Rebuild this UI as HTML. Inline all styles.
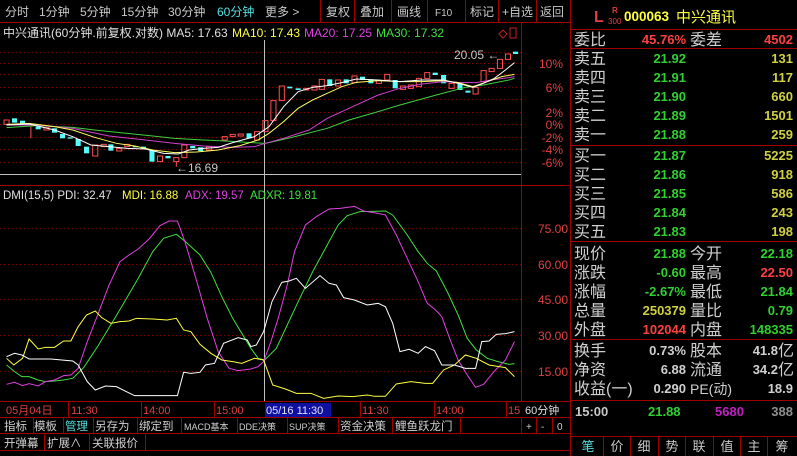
<!DOCTYPE html>
<html><head><meta charset="utf-8"><style>
body{margin:0;background:#000;width:797px;height:456px;overflow:hidden}
svg{display:block}
text{font-family:"Liberation Sans","Noto Sans CJK SC",sans-serif}
.b{font-weight:bold}
</style></head><body>
<svg width="797" height="456" viewBox="0 0 797 456">
<rect width="797" height="456" fill="#000"/>
<g fill="#c8c8c8" font-size="12">
<text x="5" y="16">分时</text><text x="39" y="16">1分钟</text><text x="80" y="16">5分钟</text><text x="121" y="16">15分钟</text><text x="168" y="16">30分钟</text>
<text x="217" y="16" fill="#54e0e0">60分钟</text><text x="265" y="16">更多 &gt;</text>
<text x="326" y="16">复权</text><text x="360" y="16">叠加</text><text x="397" y="16">画线</text><text x="435" y="16" font-size="10">F10</text><text x="470" y="16">标记</text><text x="502" y="16">+自选</text><text x="540" y="16">返回</text>
</g>
<g stroke="#a00000" stroke-width="1">
<line x1="0" y1="22.5" x2="570" y2="22.5"/>
<line x1="320.5" y1="0" x2="320.5" y2="22"/><line x1="354.5" y1="0" x2="354.5" y2="22"/><line x1="391.5" y1="0" x2="391.5" y2="22"/><line x1="427.5" y1="0" x2="427.5" y2="22"/><line x1="465.5" y1="0" x2="465.5" y2="22"/><line x1="498.5" y1="0" x2="498.5" y2="22"/><line x1="536.5" y1="0" x2="536.5" y2="22"/>
<line x1="521.5" y1="22" x2="521.5" y2="401"/>
<line x1="570.5" y1="0" x2="570.5" y2="456"/>
<line x1="0" y1="185.5" x2="570" y2="185.5"/>
<line x1="0" y1="401.5" x2="570" y2="401.5"/>
<line x1="0" y1="417.5" x2="570" y2="417.5"/>
<line x1="0" y1="433.5" x2="570" y2="433.5"/>
<line x1="0" y1="450.5" x2="570" y2="450.5"/>
</g>
<g stroke="#800000" stroke-dasharray="1,3" stroke-width="1">
<line x1="0" y1="52.5" x2="521" y2="52.5"/><line x1="0" y1="63.5" x2="521" y2="63.5"/><line x1="0" y1="74.5" x2="521" y2="74.5"/><line x1="0" y1="87.5" x2="521" y2="87.5"/><line x1="0" y1="99.5" x2="521" y2="99.5"/><line x1="0" y1="112.5" x2="521" y2="112.5"/><line x1="0" y1="124.5" x2="521" y2="124.5"/><line x1="0" y1="137.5" x2="521" y2="137.5"/><line x1="0" y1="149.5" x2="521" y2="149.5"/><line x1="0" y1="162.5" x2="521" y2="162.5"/>
<line x1="0" y1="228.5" x2="521" y2="228.5"/><line x1="0" y1="264.5" x2="521" y2="264.5"/><line x1="0" y1="299.5" x2="521" y2="299.5"/><line x1="0" y1="335.5" x2="521" y2="335.5"/><line x1="0" y1="371.5" x2="521" y2="371.5"/>
</g>
<line x1="0" y1="174.5" x2="521" y2="174.5" stroke="#c0c0c0"/>
<line x1="264.5" y1="40" x2="264.5" y2="401" stroke="#c0c0c0"/>
<g fill="#e04040" font-size="12" text-anchor="end">
<text x="563" y="68">10%</text><text x="563" y="92">6%</text><text x="563" y="117">2%</text><text x="563" y="129">0%</text><text x="563" y="142">-2%</text><text x="563" y="154">-4%</text><text x="563" y="167">-6%</text>
<text x="568" y="233">75.00</text><text x="568" y="269">60.00</text><text x="568" y="304">45.00</text><text x="568" y="340">30.00</text><text x="568" y="376">15.00</text>
</g>
<g font-size="12">
<text x="3" y="37" fill="#e0e0e0">中兴通讯(60分钟.前复权.对数) MA5: 17.63</text>
<text x="232" y="37" fill="#ffff40">MA10: 17.43</text>
<text x="304" y="37" fill="#e040e0">MA20: 17.25</text>
<text x="376" y="37" fill="#40e040">MA30: 17.32</text>
<text x="3" y="199" fill="#e0e0e0" font-size="11.5">DMI(15,5) PDI: 32.47</text>
<text x="122" y="199" fill="#ffff40" font-size="11.5">MDI: 16.88</text>
<text x="185" y="199" fill="#e040e0" font-size="11.5">ADX: 19.57</text>
<text x="250" y="199" fill="#40e040" font-size="11.5">ADXR: 19.81</text>
<text x="454" y="59" fill="#c8c8c8">20.05 ←</text>
<text x="176" y="172" fill="#c8c8c8">←16.69</text>
</g>
<path d="M503 30 l4 4 -4 4 -4 -4z" fill="none" stroke="#c02020"/>
<rect x="510" y="28" width="6" height="10" fill="none" stroke="#c02020"/>
<g transform="translate(0,30) scale(0.3636,0.3333)">
<g fill="#54fcfc">
<rect x="33" y="265" width="14" height="13"/><rect x="55" y="272" width="14" height="10"/><rect x="98" y="290" width="14" height="8"/><rect x="143" y="295" width="14" height="13"/><rect x="165" y="312" width="14" height="13"/><rect x="186" y="322" width="14" height="4"/><rect x="208" y="327" width="14" height="21"/><rect x="231" y="350" width="14" height="20"/><rect x="298" y="343" width="14" height="19"/><rect x="365" y="348" width="14" height="4"/><rect x="388" y="350" width="14" height="7"/><rect x="411" y="360" width="14" height="35"/><rect x="455" y="378" width="14" height="7"/><rect x="523" y="348" width="14" height="7"/><rect x="545" y="352" width="14" height="11"/><rect x="678" y="310" width="14" height="15"/><rect x="790" y="170" width="14" height="5"/><rect x="813" y="175" width="14" height="5"/><rect x="900" y="148" width="14" height="20"/><rect x="945" y="148" width="14" height="12"/><rect x="990" y="140" width="14" height="10"/><rect x="1013" y="148" width="14" height="12"/><rect x="1080" y="150" width="14" height="25"/><rect x="1190" y="128" width="14" height="7"/><rect x="1213" y="135" width="14" height="25"/><rect x="1258" y="162" width="14" height="18"/><rect x="1280" y="182" width="14" height="6"/><rect x="1411" y="65" width="14" height="7"/>
</g>
<g fill="none" stroke="#ff5050" stroke-width="1">
<rect x="11" y="270" width="14" height="13" vector-effect="non-scaling-stroke"/><rect x="121" y="293" width="14" height="7" vector-effect="non-scaling-stroke"/><rect x="255" y="345" width="14" height="33" vector-effect="non-scaling-stroke"/><rect x="278" y="343" width="14" height="7" vector-effect="non-scaling-stroke"/><rect x="321" y="355" width="14" height="8" vector-effect="non-scaling-stroke"/><rect x="343" y="343" width="14" height="7" vector-effect="non-scaling-stroke"/><rect x="433" y="378" width="14" height="17" vector-effect="non-scaling-stroke"/><rect x="478" y="383" width="14" height="12" vector-effect="non-scaling-stroke"/><rect x="500" y="345" width="14" height="38" vector-effect="non-scaling-stroke"/><rect x="568" y="350" width="14" height="10" vector-effect="non-scaling-stroke"/><rect x="611" y="320" width="14" height="10" vector-effect="non-scaling-stroke"/><rect x="633" y="313" width="14" height="7" vector-effect="non-scaling-stroke"/><rect x="655" y="312" width="14" height="6" vector-effect="non-scaling-stroke"/><rect x="700" y="305" width="14" height="25" vector-effect="non-scaling-stroke"/><rect x="723" y="272" width="14" height="33" vector-effect="non-scaling-stroke"/><rect x="745" y="212" width="14" height="60" vector-effect="non-scaling-stroke"/><rect x="768" y="168" width="14" height="44" vector-effect="non-scaling-stroke"/><rect x="835" y="175" width="14" height="5" vector-effect="non-scaling-stroke"/><rect x="858" y="168" width="14" height="12" vector-effect="non-scaling-stroke"/><rect x="878" y="148" width="14" height="30" vector-effect="non-scaling-stroke"/><rect x="923" y="150" width="14" height="18" vector-effect="non-scaling-stroke"/><rect x="968" y="138" width="14" height="20" vector-effect="non-scaling-stroke"/><rect x="1035" y="152" width="14" height="8" vector-effect="non-scaling-stroke"/><rect x="1058" y="133" width="14" height="17" vector-effect="non-scaling-stroke"/><rect x="1101" y="168" width="14" height="10" vector-effect="non-scaling-stroke"/><rect x="1123" y="165" width="14" height="10" vector-effect="non-scaling-stroke"/><rect x="1145" y="145" width="14" height="25" vector-effect="non-scaling-stroke"/><rect x="1168" y="128" width="14" height="17" vector-effect="non-scaling-stroke"/><rect x="1235" y="160" width="14" height="15" vector-effect="non-scaling-stroke"/><rect x="1301" y="172" width="14" height="20" vector-effect="non-scaling-stroke"/><rect x="1323" y="122" width="14" height="33" vector-effect="non-scaling-stroke"/><rect x="1345" y="115" width="14" height="10" vector-effect="non-scaling-stroke"/><rect x="1368" y="88" width="14" height="27" vector-effect="non-scaling-stroke"/><rect x="1390" y="72" width="14" height="16" vector-effect="non-scaling-stroke"/>
<line x1="85" y1="290" x2="85" y2="325" vector-effect="non-scaling-stroke"/><line x1="485" y1="395" x2="485" y2="410" vector-effect="non-scaling-stroke"/>
</g>
<g fill="none" stroke-width="1">
<polyline vector-effect="non-scaling-stroke" stroke="#40d040" points="18,293 100,287 200,292 260,300 350,310 420,318 480,325 560,330 620,333 680,337 730,340 800,323 900,295 960,270 1040,245 1100,225 1200,195 1280,172 1330,165 1400,150 1415,145"/>
<polyline vector-effect="non-scaling-stroke" stroke="#d040d0" points="18,285 100,285 200,295 300,318 400,330 480,340 560,348 640,352 700,350 730,340 780,325 850,300 900,265 960,235 1040,195 1100,175 1160,162 1220,155 1260,157 1310,158 1350,150 1400,143 1415,140"/>
<polyline vector-effect="non-scaling-stroke" stroke="#ffff60" points="18,283 80,280 150,290 200,300 260,322 320,340 370,348 420,360 480,368 540,366 600,360 660,347 710,330 740,310 780,275 820,235 860,210 900,190 940,170 980,157 1040,152 1100,155 1160,155 1220,152 1260,158 1300,170 1340,155 1380,140 1415,133"/>
<polyline vector-effect="non-scaling-stroke" stroke="#ffffff" points="18,285 80,282 150,300 200,320 250,345 300,350 350,355 400,357 450,370 490,372 520,360 560,355 600,352 640,338 700,320 740,290 780,230 820,185 860,172 900,167 940,158 980,147 1040,150 1100,155 1160,150 1220,150 1260,160 1300,172 1330,160 1360,145 1390,120 1415,98"/>
</g>
</g>
<g transform="translate(0,185) scale(0.3636,0.3333)" fill="none" stroke-width="1">
<polyline vector-effect="non-scaling-stroke" stroke="#40e040" points="18,540 40,560 60,575 80,575 105,585 125,590 150,588 175,585 200,580 230,548 270,482 310,410 340,355 380,280 420,200 450,160 485,148 510,170 550,210 580,262 610,335 640,400 665,445 690,490 710,520 728,525 760,490 790,420 820,350 860,260 900,180 930,120 955,92 990,80 1060,78 1080,90 1120,150 1150,200 1175,235 1200,258 1230,320 1260,390 1285,460 1310,495 1340,520 1370,530 1400,538 1415,536"/>
<polyline vector-effect="non-scaling-stroke" stroke="#e040e0" points="18,598 40,592 62,602 80,596 105,603 125,590 150,585 175,572 195,570 215,550 240,470 265,400 300,300 330,230 355,210 380,192 410,162 440,122 465,108 488,108 510,175 540,285 570,400 600,500 630,550 655,557 690,552 710,545 725,530 745,470 765,400 790,300 810,200 840,120 870,95 905,72 935,70 975,64 1000,78 1040,85 1060,90 1090,150 1120,220 1150,290 1175,355 1195,372 1215,395 1240,470 1260,525 1285,570 1308,607 1330,598 1360,558 1390,525 1415,470"/>
<polyline vector-effect="non-scaling-stroke" stroke="#ffff40" points="18,520 38,540 62,520 80,462 105,492 125,487 150,487 175,468 195,468 215,425 238,390 262,378 280,398 305,415 330,410 355,408 375,400 420,402 460,405 485,400 505,435 525,440 550,478 580,505 610,525 640,530 665,535 700,520 725,525 750,600 785,612 815,625 855,625 890,640 930,633 970,635 1010,630 1030,634 1060,634 1090,597 1130,590 1170,595 1190,595 1220,555 1250,540 1280,510 1310,520 1345,540 1390,548 1415,575"/>
<polyline vector-effect="non-scaling-stroke" stroke="#ffffff" points="18,515 40,505 60,510 80,522 140,522 200,528 215,540 240,590 262,615 290,603 320,605 370,632 488,632 505,562 525,565 550,562 565,540 590,535 615,475 655,458 680,465 690,485 705,480 725,440 748,350 775,292 795,288 815,280 840,310 880,272 905,295 925,300 945,338 975,345 1010,360 1040,355 1060,365 1080,415 1100,500 1125,493 1150,505 1170,485 1195,497 1215,540 1250,540 1280,550 1308,550 1325,470 1345,468 1365,448 1390,446 1415,440"/>
</g>
<rect x="265" y="403" width="66" height="14" fill="#1010a0"/>
<g font-size="11" fill="#e04040">
<text x="6" y="414">05月04日</text><text x="71" y="414">11:30</text><text x="143" y="414">14:00</text><text x="216" y="414">15:00</text>
<text x="266" y="414" fill="#e0e0ff">05/16 11:30</text>
<text x="362" y="414">11:30</text><text x="436" y="414">14:00</text><text x="508" y="414">15</text>
<text x="525" y="414" fill="#e0e0e0">60分钟</text>
</g>
<g stroke="#a00000"><line x1="68.5" y1="402" x2="68.5" y2="417"/><line x1="141.5" y1="402" x2="141.5" y2="417"/><line x1="214.5" y1="402" x2="214.5" y2="417"/><line x1="360.5" y1="402" x2="360.5" y2="417"/><line x1="434.5" y1="402" x2="434.5" y2="417"/><line x1="506.5" y1="402" x2="506.5" y2="417"/>
<line x1="33.5" y1="418" x2="33.5" y2="433"/><line x1="63.5" y1="418" x2="63.5" y2="433"/><line x1="93.5" y1="418" x2="93.5" y2="433"/><line x1="137.5" y1="418" x2="137.5" y2="433"/><line x1="181.5" y1="418" x2="181.5" y2="433"/><line x1="237.5" y1="418" x2="237.5" y2="433"/><line x1="287.5" y1="418" x2="287.5" y2="433"/><line x1="338.5" y1="418" x2="338.5" y2="433"/><line x1="392.5" y1="418" x2="392.5" y2="433"/><line x1="460.5" y1="418" x2="460.5" y2="433"/><line x1="521.5" y1="418" x2="521.5" y2="433"/><line x1="536.5" y1="418" x2="536.5" y2="433"/><line x1="552.5" y1="418" x2="552.5" y2="433"/>
<line x1="44.5" y1="434" x2="44.5" y2="450"/><line x1="89.5" y1="434" x2="89.5" y2="450"/><line x1="145.5" y1="434" x2="145.5" y2="450"/></g>
<g font-size="11.5" fill="#d0d0d0">
<text x="4" y="430">指标</text><text x="34" y="430">模板</text><text x="65" y="430" fill="#54e0e0">管理</text><text x="95" y="430">另存为</text><text x="139" y="430">绑定到</text>
<text x="184" y="430" font-size="9">MACD基本</text><text x="239" y="430" font-size="9">DDE决策</text><text x="289" y="430" font-size="9">SUP决策</text><text x="340" y="430">资金决策</text><text x="395" y="430">鲤鱼跃龙门</text>
<text x="526" y="430" font-size="10">+</text><text x="541" y="430" font-size="10">-</text><text x="557" y="430" font-size="10">0</text>
<text x="4" y="447">开弹幕</text><text x="47" y="447">扩展∧</text><text x="92" y="447">关联报价</text>
</g>
<g stroke="#a00000"><line x1="571" y1="29.5" x2="797" y2="29.5"/><line x1="571" y1="48.5" x2="797" y2="48.5"/><line x1="571" y1="145.5" x2="797" y2="145.5"/><line x1="571" y1="241.5" x2="797" y2="241.5"/><line x1="571" y1="339.5" x2="797" y2="339.5"/><line x1="571" y1="400.5" x2="797" y2="400.5"/><line x1="571" y1="436.5" x2="797" y2="436.5"/>
<line x1="603.5" y1="437" x2="603.5" y2="456"/><line x1="630.5" y1="437" x2="630.5" y2="456"/><line x1="658.5" y1="437" x2="658.5" y2="456"/><line x1="685.5" y1="437" x2="685.5" y2="456"/><line x1="713.5" y1="437" x2="713.5" y2="456"/><line x1="740.5" y1="437" x2="740.5" y2="456"/><line x1="767.5" y1="437" x2="767.5" y2="456"/></g>
<text x="594" y="22" fill="#e04040" font-size="16" font-family="Liberation Serif" class="b">L</text>
<text x="612" y="13" fill="#e04040" font-size="8" class="b">R</text><text x="608" y="24" fill="#e04040" font-size="8">300</text>
<text x="624" y="21" fill="#ffff40" font-size="13.5" class="b">000063</text><text x="676" y="22" fill="#ffff40" font-size="15">中兴通讯</text>
<g font-size="16" fill="#d0d0d0">
<text x="574" y="45">委比</text><text x="690" y="45">委差</text>
<text x="574" y="64">卖五</text><text x="574" y="83">卖四</text><text x="574" y="102">卖三</text><text x="574" y="121">卖二</text><text x="574" y="140">卖一</text>
<text x="574" y="161">买一</text><text x="574" y="180">买二</text><text x="574" y="199">买三</text><text x="574" y="218">买四</text><text x="574" y="237">买五</text>
<text x="574" y="259">现价</text><text x="574" y="278">涨跌</text><text x="574" y="297">涨幅</text><text x="574" y="316">总量</text><text x="574" y="335">外盘</text>
<text x="690" y="259">今开</text><text x="690" y="278">最高</text><text x="690" y="297">最低</text><text x="690" y="316">量比</text><text x="690" y="335">内盘</text>
<text x="574" y="356">换手</text><text x="574" y="375">净资</text><text x="574" y="394">收益(一)</text>
<text x="690" y="356">股本</text><text x="690" y="375">流通</text><text x="690" y="394" font-size="14">PE(动)</text>
</g>
<g font-size="13" class="b" text-anchor="end">
<text x="686" y="44" fill="#ff4040">45.76%</text><text x="793" y="44" fill="#ff4040">4502</text>
<g fill="#30d030"><text x="686" y="63">21.92</text><text x="686" y="82">21.91</text><text x="686" y="101">21.90</text><text x="686" y="120">21.89</text><text x="686" y="139">21.88</text><text x="686" y="160">21.87</text><text x="686" y="179">21.86</text><text x="686" y="198">21.85</text><text x="686" y="217">21.84</text><text x="686" y="236">21.83</text></g>
<g fill="#d0d040"><text x="793" y="63">131</text><text x="793" y="82">117</text><text x="793" y="101">660</text><text x="793" y="120">1501</text><text x="793" y="139">259</text><text x="793" y="160">5225</text><text x="793" y="179">918</text><text x="793" y="198">586</text><text x="793" y="217">243</text><text x="793" y="236">198</text></g>
<text x="686" y="258" fill="#30d030">21.88</text><text x="686" y="277" fill="#30d030">-0.60</text><text x="686" y="296" fill="#30d030">-2.67%</text><text x="686" y="315" fill="#d0d040">250379</text><text x="686" y="334" fill="#ff4040">102044</text>
<text x="793" y="258" fill="#30d030">22.18</text><text x="793" y="277" fill="#ff4040">22.50</text><text x="793" y="296" fill="#30d030">21.84</text><text x="793" y="315" fill="#30d030">0.79</text><text x="793" y="334" fill="#30d030">148335</text>
<g fill="#d0d0d0"><text x="686" y="355">0.73%</text><text x="686" y="374">6.88</text><text x="686" y="393">0.290</text><text x="793" y="393">18.9</text><text x="778" y="355">41.8</text><text x="778" y="374">34.2</text></g>
</g>
<text x="778" y="356" font-size="16" fill="#d0d0d0">亿</text><text x="778" y="375" font-size="16" fill="#d0d0d0">亿</text>
<g font-size="13" class="b">
<text x="575" y="416" fill="#c8c8c8">15:00</text><text x="648" y="416" fill="#30d030">21.88</text><text x="715" y="416" fill="#c020c0">5680</text><text x="793" y="416" fill="#909090" text-anchor="end">388</text>
</g>
<g font-size="13" fill="#c8c8c8" text-anchor="middle">
<text x="588" y="451" fill="#54e0e0">笔</text><text x="617" y="451">价</text><text x="644" y="451">细</text><text x="672" y="451">势</text><text x="699" y="451">联</text><text x="727" y="451">值</text><text x="754" y="451">主</text><text x="782" y="451">筹</text>
</g>
</svg>
</body></html>
